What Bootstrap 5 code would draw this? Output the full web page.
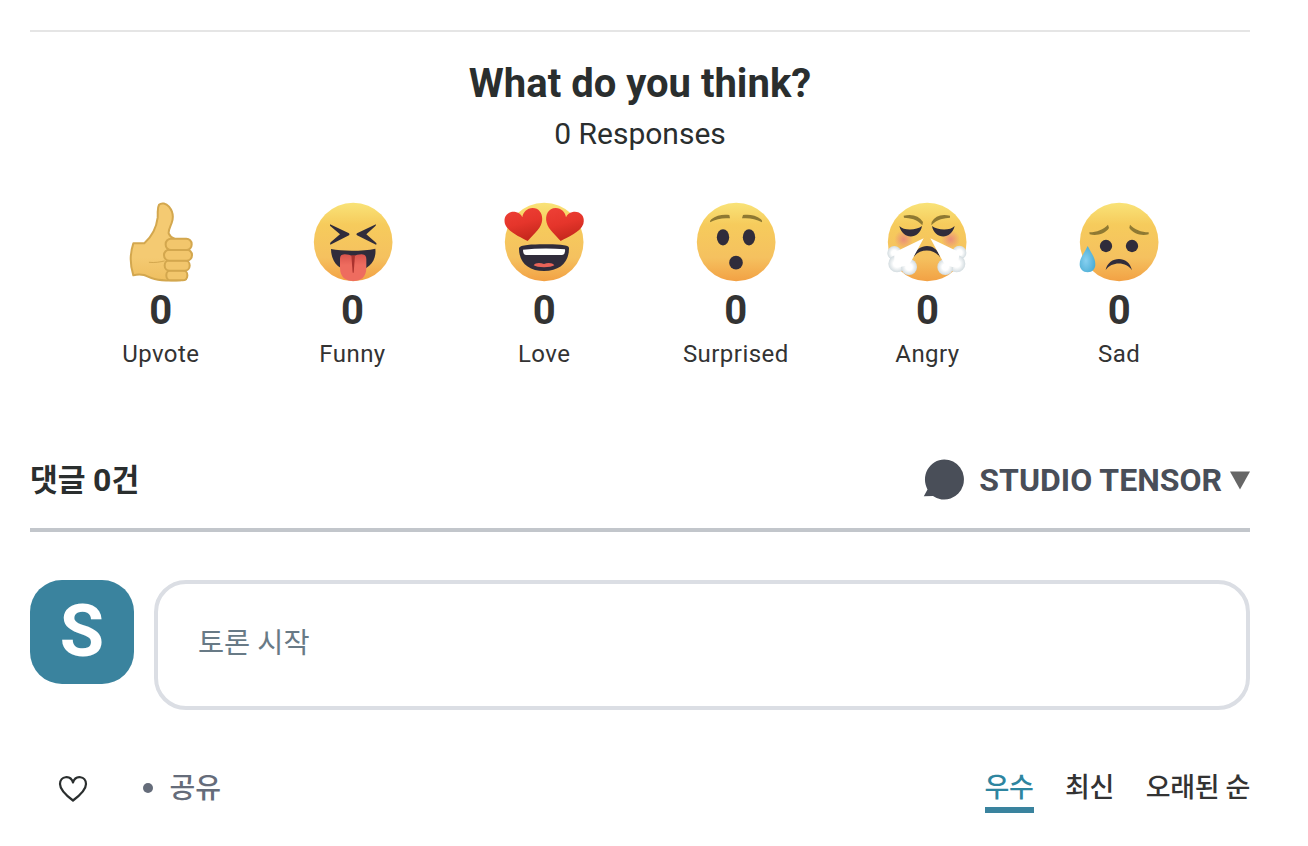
<!DOCTYPE html>
<html lang="ko">
<head>
<meta charset="utf-8">
<meta name="viewport" content="width=device-width, initial-scale=1">
<title>Comments</title>
<link rel="stylesheet" href="https://cdn.jsdelivr.net/npm/bootstrap@5.3.0/dist/css/bootstrap.min.css">
<style>
body{font-family:Roboto,"Noto Sans CJK KR",sans-serif;color:#2a2e2e;background:#fff;overflow:hidden}
.thread{width:1220px;margin:30px 0 0 30px}
.reactions-panel{border-top:2px solid #e5e5e5;padding-top:28px;height:429px}
.title{font-size:40px;line-height:48px;margin:0 0 6px}
.responses{font-size:30px;line-height:40px;margin-bottom:48px}
.reactions{width:1150px}
.reaction svg{width:80px;height:80px;overflow:visible}
.count{font-size:40px;line-height:48px;margin-top:5px;color:#333}
.caption-text{font-size:24px;line-height:32px;margin-top:3px;letter-spacing:.45px;color:#333}
.thread-head{height:73px;border-bottom:4px solid #c2c6cb;font-size:32px;line-height:40px;padding-top:1px}
.comment-count{font-size:30.2px}
.comment-number{font-size:32px}
.brand{color:#494e58}
.bubble{overflow:visible}
.avatar{width:104px;height:104px;border-radius:32px;background:#3a839e;font-size:72px;line-height:104px}
.composer{height:130px;margin-left:20px;border:4px solid #dbdee4;border-radius:32px;color:#687a86;font-size:28.4px;line-height:40px;padding:40px}
.actions{height:48px;margin-top:56px;font-size:28px;font-weight:500}
.heart{margin:9px 0 0 28px}
.dot{width:10px;height:10px;margin:17px 16.500px 0 55px;background:#656c7a}
.share,.sort{line-height:37px;padding-top:4px}
.share{color:#656c7a}
.sort{color:#333;gap:31.6px;font-size:27px;letter-spacing:-.35px}
.sort-active{color:#2e859f;box-shadow:0 6px #3a839e}
</style>
</head>
<body>
<svg width="0" height="0" class="position-absolute" aria-hidden="true">
<defs>
<linearGradient id="skin" x1="0" y1="0" x2="0" y2="1"><stop offset="0" stop-color="#f9e378"/><stop offset=".28" stop-color="#f6cb5c"/><stop offset=".7" stop-color="#f5c15f"/><stop offset="1" stop-color="#f2a144"/></linearGradient>
<linearGradient id="red" x1="0" y1="0" x2=".3" y2="1"><stop offset="0" stop-color="#ee4036"/><stop offset=".55" stop-color="#e5352b"/><stop offset="1" stop-color="#c7281d"/></linearGradient>
<linearGradient id="tongue" x1="0" y1="0" x2="0" y2="1"><stop offset="0" stop-color="#d9534c"/><stop offset=".4" stop-color="#ee6c5f"/></linearGradient>
<linearGradient id="hand" x1="0" y1="0" x2="0" y2="1"><stop offset=".7" stop-color="#f4ca72"/><stop offset="1" stop-color="#efbf60"/></linearGradient>
<radialGradient id="blush"><stop offset="0" stop-color="#ea8e78"/><stop offset="1" stop-color="#ea8e78" stop-opacity="0"/></radialGradient>
<radialGradient id="puff"><stop offset=".4" stop-color="#fff"/><stop offset="1" stop-color="#d3dce0"/></radialGradient>
<radialGradient id="tear" cx=".4" cy=".55" r=".6"><stop offset="0" stop-color="#87d0f1"/><stop offset="1" stop-color="#4badd4"/></radialGradient>
<circle id="face" cx="150.500" cy="156" r="118" fill="url(#skin)"/>
<path id="frown" d="M110 240C118 198 179 193 189 241C174 216 130 212 110 240Z" fill="#302c3b"/>
</defs>
</svg>
<main class="thread">
<section class="reactions-panel text-center">
<h1 class="title fw-bold">What do you think?</h1>
<div class="responses">0 Responses</div>
<div class="reactions row row-cols-6 g-0 mx-auto">
<div class="reaction col d-flex flex-column align-items-center">
<svg viewBox="33 36 240 240"><g stroke="#d3a74e" stroke-width="6" stroke-linejoin="round" stroke-linecap="round"><path d="M70 160H103C123 142 139 115 143 83C144 64 141 55 147 44C155 37 168 40 177 50C191 67 190 85 185 99C180 113 175 119 176 130C181 143 190 144 198 148L228 268C207 273 159 273 134 267C120 264 111 258 102 255C89 252 80 253 70 256C59 222 60 190 70 160Z" fill="url(#hand)"/><path d="M118 217C134 219 150 216 163 213" fill="none" stroke-width="3"/><g fill="#f2c66c"><rect x="169" y="241" width="63" height="30" rx="14"/><rect x="164" y="211" width="75" height="31" rx="15"/><rect x="162" y="179" width="84" height="33" rx="16"/><rect x="167" y="146" width="78" height="34" rx="16"/></g></g></svg>
<div class="count fw-bold">0</div><div class="caption-text">Upvote</div></div>
<div class="reaction col d-flex flex-column align-items-center">
<svg viewBox="29 36 240 240"><use href="#face" x="2"/><g fill="#302c3b"><path d="M83 103L140 130Q143 133 140 136L84 164Q82 161 85 157L113 133L83 107Z"/><path d="M221 103L164 130Q160 133 164 136L221 164Q225 162 221 158L192 133L220 107Z"/><path d="M86 177C120 184 182 184 219 176C223 208 204 243 153 243C105 243 86 210 86 177Z"/></g><path d="M113 206Q113 193 127 193Q141 193 150 198H155Q163 193 178 193Q192 193 192 207V234C192 261 176 273 153 273C130 273 113 261 113 234Z" fill="url(#tongue)"/><path d="M147 196H158L154 248H151Z" fill="#aa322e"/></svg>
<div class="count fw-bold">0</div><div class="caption-text">Funny</div></div>
<div class="reaction col d-flex flex-column align-items-center">
<svg viewBox="30 36 240 240"><use href="#face"/><path d="M101 153C82 142 42 127 33 102C26 77 45 62 65 66C76 68 82 75 85 82C87 67 99 54 116 54C138 54 149 76 143 98C138 118 115 136 101 153Z" fill="url(#red)"/><path d="M200 153C219 142 259 127 268 102C275 77 256 62 236 66C225 68 219 75 216 82C214 67 202 54 185 54C163 54 152 76 158 98C163 118 186 136 200 153Z" fill="url(#red)"/><path d="M75 174C77 165 115 163 150 163C185 163 223 164 225 173C226 215 199 243 150 243C104 243 74 218 75 174Z" fill="#302c3b"/><path d="M87 179Q150 173 213 178Q215 185 211 191Q208 195 202 195H98Q87 196 87 179Z" fill="#fff"/><path d="M119 226C124 218 138 218 150 222C163 217 176 219 181 226C171 234 129 234 119 226Z" fill="#e96358"/></svg>
<div class="count fw-bold">0</div><div class="caption-text">Love</div></div>
<div class="reaction col d-flex flex-column align-items-center">
<svg viewBox="30 36 240 240"><use href="#face"/><g fill="#302c3b"><ellipse cx="111" cy="142" rx="18.500" ry="24.500"/><ellipse cx="189" cy="142" rx="18.500" ry="24.500"/><circle cx="150" cy="218" r="20.500"/></g><path d="M72 97Q71 92 76 88C91 75 113 72 130 75L132 85C111 83 92 86 72 97ZM228 97Q230 92 225 88C210 75 188 72 171 75L168 85C189 83 208 86 228 97Z" fill="#8f7932"/></svg>
<div class="count fw-bold">0</div><div class="caption-text">Surprised</div></div>
<div class="reaction col d-flex flex-column align-items-center">
<svg viewBox="30 36 240 240"><use href="#face"/><circle cx="80" cy="148" r="28" fill="url(#blush)"/><circle cx="221" cy="148" r="28" fill="url(#blush)"/><path d="M80 77Q120 68 138 96L136 106C120 87 99 84 81 83ZM219 77Q180 68 164 96L163 106C180 87 203 84 219 83Z" fill="#8f7932"/><path d="M67 108C80 123 120 121 135 108C128 148 77 151 67 108ZM233 108C220 123 180 121 165 108C172 148 223 151 233 108Z" fill="#302c3b"/><use href="#frown" y="-39"/><g fill="url(#puff)"><circle cx="52" cy="189" r="21"/><circle cx="60" cy="221" r="26"/><circle cx="96" cy="231" r="24"/><circle cx="247" cy="188" r="21"/><circle cx="239" cy="221" r="26"/><circle cx="205" cy="231" r="24"/></g><path d="M140 145L67 180L52 186V218L66 232L94 226L103 213ZM160 145L233 180L249 186L243 216L230 232L205 226L197 213Z" fill="#fff"/></svg>
<div class="count fw-bold">0</div><div class="caption-text">Angry</div></div>
<div class="reaction col d-flex flex-column align-items-center">
<svg viewBox="30 36 240 240"><use href="#face"/><g fill="#302c3b"><circle cx="111" cy="168" r="18.500"/><circle cx="189" cy="168" r="18.500"/></g><use href="#frown"/><path d="M61 127C84 126 103 119 117 104L120 114C108 133 82 138 62 133ZM239 127C216 126 197 119 183 104L181 114C194 133 218 138 239 133Z" fill="#8f7932"/><path d="M56 168C68 191 79 204 79 223C79 237 70 247 56 247C42 247 32 237 32 223C32 204 45 191 56 168Z" fill="url(#tear)"/></svg>
<div class="count fw-bold">0</div><div class="caption-text">Sad</div></div>
</div>
</section>
<header class="thread-head d-flex justify-content-between align-items-start fw-bold">
<div class="comment-count">댓글 <span class="comment-number">0</span>건</div>
<div class="brand d-flex">
<svg class="bubble" width="42" height="42" viewBox="0 0 42 42"><path d="M22.200 -.5A19.600 20.100 0 1 1 11 36L1.800 36.300L5.500 29.500A19.600 20.100 0 0 1 22.200 -.5Z" transform="translate(1 -.1)" fill="#494e58"/></svg>
<span class="ms-3">STUDIO TENSOR</span>
<svg class="ms-2" width="20" height="40" viewBox="0 0 20 40"><path d="M0 11.500H20L10 29.500Z" fill="#666"/></svg>
</div>
</header>
<section class="d-flex mt-5">
<div class="avatar text-white text-center fw-bold flex-shrink-0">S</div>
<div class="composer flex-grow-1">토론 시작</div>
</section>
<footer class="actions d-flex align-items-start">
<svg class="heart" width="30" height="28" viewBox="0 0 30 28"><path d="M15 25.500C10 21.800 2 15.200 2 9C2 1 12.500-.5 15 7.500C17.500-.5 28 1 28 9C28 15.200 20 21.800 15 25.500Z" fill="none" stroke="#2a2e2e" stroke-width="2.200" stroke-linejoin="round"/></svg>
<span class="dot rounded-circle"></span>
<span class="share">공유</span>
<div class="sort d-flex ms-auto"><span class="sort-active">우수</span><span>최신</span><span>오래된 순</span></div>
</footer>
</main>
<script src="https://cdn.jsdelivr.net/npm/bootstrap@5.3.0/dist/js/bootstrap.bundle.min.js"></script>
</body>
</html>
